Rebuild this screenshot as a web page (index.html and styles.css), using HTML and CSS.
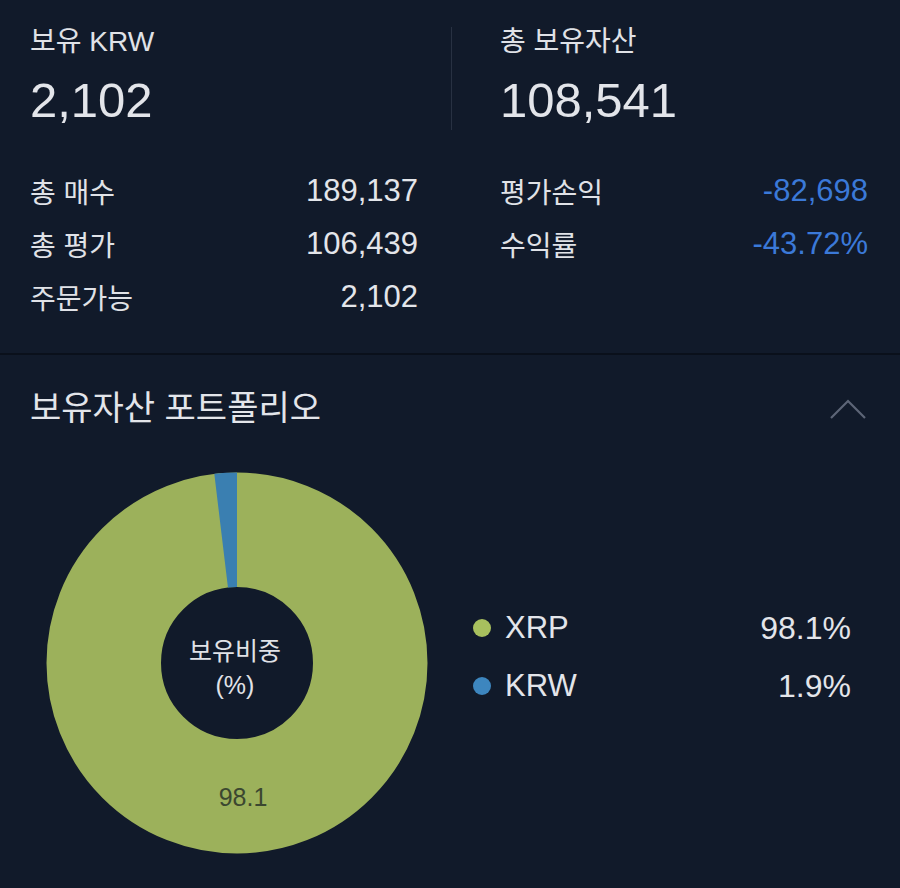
FILE: index.html
```html
<!DOCTYPE html>
<html lang="ko">
<head>
<meta charset="utf-8">
<title>보유자산</title>
<link rel="stylesheet" href="styles.css">
</head>
<body>
<div class="page">
  <section class="summary">
    <div class="head">
      <div class="head-cell">
        <div class="head-title">보유 KRW</div>
        <div class="head-value">2,102</div>
      </div>
      <div class="head-cell head-right">
        <div class="head-title">총 보유자산</div>
        <div class="head-value">108,541</div>
      </div>
    </div>
    <div class="rows">
      <div class="col col-left">
        <div class="row"><span class="label">총 매수</span><span class="num">189,137</span></div>
        <div class="row"><span class="label">총 평가</span><span class="num">106,439</span></div>
        <div class="row"><span class="label">주문가능</span><span class="num">2,102</span></div>
      </div>
      <div class="col col-right">
        <div class="row"><span class="label">평가손익</span><span class="num neg">-82,698</span></div>
        <div class="row"><span class="label">수익률</span><span class="num neg">-43.72%</span></div>
      </div>
    </div>
  </section>

  <section class="portfolio">
    <div class="port-head">
      <h2 class="port-title">보유자산 포트폴리오</h2>
      <svg class="chevron" width="38" height="24" viewBox="0 0 38 24">
        <path d="M2 21 L19 4 L36 21" fill="none" stroke="#5d6577" stroke-width="2.2"/>
      </svg>
    </div>
    <div class="chart-area">
      <div class="donut">
        <svg class="donut-svg" width="382" height="382" viewBox="0 0 382 382">
          <circle cx="191" cy="191" r="133.25" fill="none" stroke="#9cb15b" stroke-width="114.5"/>
          <path d="M 191 0.5 A 190.5 190.5 0 0 0 168.31 1.86 L 181.95 115.54 A 76 76 0 0 1 191 115 Z" fill="#3a7fb1"/>
        </svg>
        <div class="donut-center">보유비중<br>(%)</div>
        <div class="donut-value">98.1</div>
      </div>
      <ul class="legend">
        <li class="legend-row"><span class="dot dot-xrp"></span><span class="legend-name">XRP</span><span class="legend-pct">98.1%</span></li>
        <li class="legend-row"><span class="dot dot-krw"></span><span class="legend-name">KRW</span><span class="legend-pct">1.9%</span></li>
      </ul>
    </div>
  </section>
</div>
</body>
</html>
```

FILE: styles.css
```css
* { box-sizing: border-box; }
html, body {
  margin: 0;
  padding: 0;
  background: #111a2a;
}
body {
  font-family: "Liberation Sans", "Noto Sans CJK KR", sans-serif;
  color: #e3e5ea;
  width: 900px;
  height: 888px;
  overflow: hidden;
}
.page {
  display: flex;
  flex-direction: column;
}

/* summary */
.summary {
  padding: 27px 32px 30px 30px;
  border-bottom: 2px solid #0a101b;
}
.head {
  display: flex;
}
.head-cell {
  width: 421px;
  display: flex;
  flex-direction: column;
}
.head-right {
  border-left: 1px solid #283142;
  padding-left: 48px;
  flex: 1;
}
.head-title {
  font-size: 28px;
  line-height: 30px;
  color: #e0e2e7;
}
.head-value {
  margin-top: 14px;
  font-size: 49px;
  line-height: 59px;
  color: #e3e5ea;
}
.rows {
  display: grid;
  grid-template-columns: 388px 368px;
  column-gap: 82px;
  margin-top: 34px;
}
.col {
  display: flex;
  flex-direction: column;
}
.row {
  display: flex;
  justify-content: space-between;
  align-items: center;
  height: 53px;
}
.label {
  font-size: 28px;
  color: #e0e2e7;
}
.num {
  font-size: 31px;
  color: #e3e5ea;
}
.num.neg {
  color: #3b79d8;
}

/* portfolio */
.portfolio {
  padding-top: 33px;
}
.port-head {
  display: flex;
  justify-content: space-between;
  align-items: center;
  padding: 0 33px 0 30px;
  height: 40px;
}
.port-title {
  margin: 0;
  font-weight: normal;
  font-size: 34px;
  line-height: 40px;
  color: #e3e5ea;
}
.chevron {
  display: block;
  margin-top: 1px;
}
.chart-area {
  display: flex;
  align-items: center;
  padding-left: 46px;
  margin-top: 44px;
}
.donut {
  display: grid;
  width: 382px;
  height: 382px;
  flex: none;
}
.donut > * {
  grid-area: 1 / 1;
}
.donut-svg {
  display: block;
}
.donut-center {
  place-self: center;
  text-align: center;
  font-size: 25px;
  line-height: 34px;
  color: #e0e2e7;
  margin-top: 10px;
  margin-left: -4px;
}
.donut-value {
  justify-self: center;
  align-self: end;
  margin-bottom: 42px;
  margin-left: 12px;
  font-size: 25px;
  line-height: 30px;
  color: #3b4730;
}
.legend {
  list-style: none;
  margin: 0 0 12px 45px;
  padding: 0;
  width: 378px;
}
.legend-row {
  display: flex;
  align-items: center;
  height: 58px;
}
.dot {
  width: 18px;
  height: 18px;
  border-radius: 50%;
  flex: none;
}
.dot-xrp { background: #a8c05e; }
.dot-krw { background: #3d86bf; }
.legend-name {
  margin-left: 14px;
  font-size: 31px;
  color: #e3e5ea;
}
.legend-pct {
  margin-left: auto;
  font-size: 32px;
  color: #e3e5ea;
}
```
